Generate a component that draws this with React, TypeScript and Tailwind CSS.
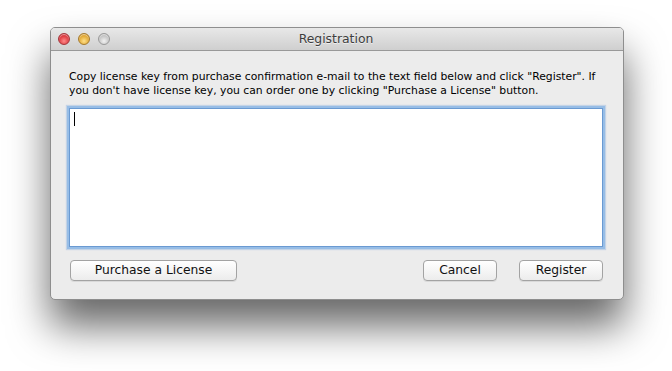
import React from "react";

const font = { fontFamily: '"DejaVu Sans", "Liberation Sans", sans-serif' };

function Light({ from, to, border }: { from: string; to: string; border: string }) {
  return (
    <div
      className="w-[12px] h-[12px] rounded-full"
      style={{
        background: `radial-gradient(circle at 50% 70%, ${to} 0%, ${from} 75%)`,
        border: `1px solid ${border}`,
        boxShadow: "inset 0 1px 1px rgba(255,255,255,0.6)",
      }}
    />
  );
}

function Btn({ children, w }: { children: React.ReactNode; w: string }) {
  return (
    <div
      className={`${w} h-[21px] flex items-center justify-center rounded-[4px] border border-[#a3a3a3] bg-gradient-to-b from-[#ffffff] to-[#ececec] text-[12.3px] text-[#111] shadow-[0_1px_0_rgba(0,0,0,0.08)]`}
      style={font}
    >
      {children}
    </div>
  );
}

export default function App() {
  return (
    <div className="w-[672px] h-[371px] bg-white pt-[27px] pl-[50px]">
      <div className="w-[574px] h-[273px] rounded-[5px] bg-[#ececec] border border-[#8e8e8e] shadow-[0_26px_40px_rgba(0,0,0,0.6)] overflow-hidden flex flex-col">
        <div className="h-[23px] shrink-0 bg-gradient-to-b from-[#e8e8e8] to-[#cfcfcf] border-b border-[#999] flex items-center relative">
          <div className="flex gap-[8px] pl-[7px]">
            <Light from="#d3232b" to="#ff8a8a" border="#a3343a" />
            <Light from="#d99a1f" to="#ffe08a" border="#a57a2d" />
            <Light from="#b8b8b8" to="#f2f2f2" border="#9a9a9a" />
          </div>
          <div
            className="absolute inset-0 flex items-center justify-center text-[12.4px] text-[#3d3d3d] pr-[2px]"
            style={{ ...font, textShadow: "0 1px 0 rgba(255,255,255,0.6)" }}
          >
            Registration
          </div>
        </div>
        <div className="flex flex-col px-[18px] pt-[19px]">
          <p className="text-[10.8px] leading-[14px] text-[#000]" style={font}>
            Copy license key from purchase confirmation e-mail to the text field below and click "Register". If you don't have license key, you can order one by clicking "Purchase a License" button.
          </p>
          <div className="mt-[10px] h-[139px] w-[534px] bg-white border border-[#6a9ad2] shadow-[0_0_0_2px_#97bde6,0_0_1px_3px_rgba(120,165,220,0.35)] relative">
            <div className="absolute left-[4px] top-[3px] w-[1px] h-[14px] bg-black" />
          </div>
          <div className="flex items-center mt-[13px] pl-[1px] pr-[2px]">
            <Btn w="w-[167px]">Purchase a License</Btn>
            <div className="flex-1" />
            <Btn w="w-[74px]">Cancel</Btn>
            <div className="w-[22px]" />
            <Btn w="w-[84px]">Register</Btn>
          </div>
        </div>
      </div>
    </div>
  );
}
